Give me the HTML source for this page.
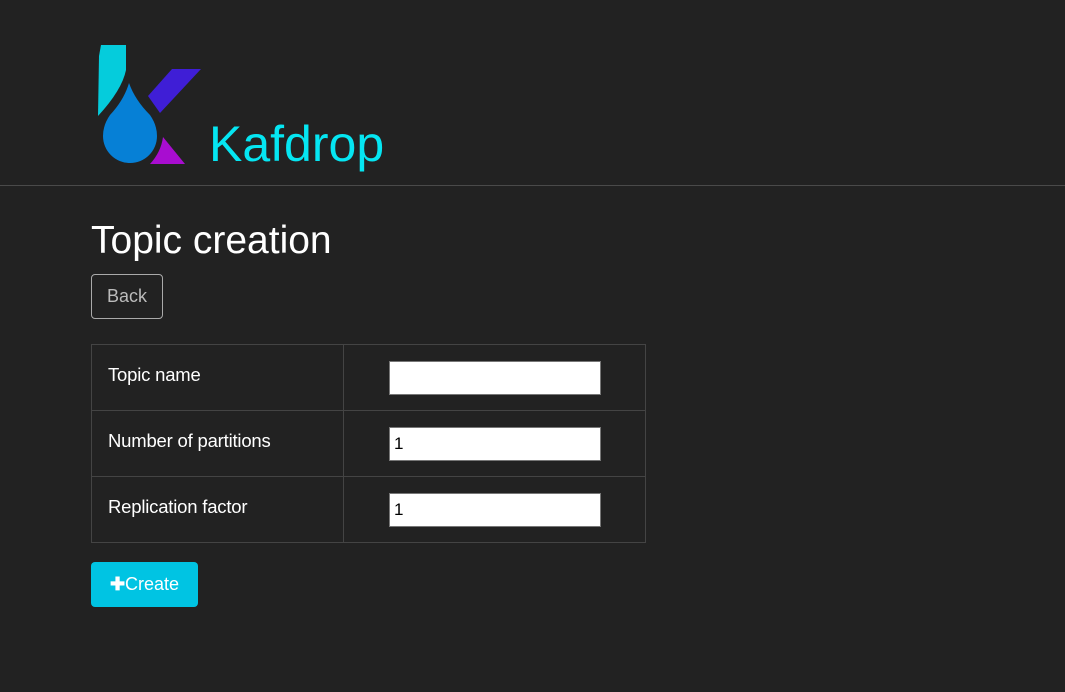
<!DOCTYPE html>
<html><head><style>
body{margin:0;background:#222;width:1065px;height:692px;overflow:hidden;font-family:"Liberation Sans",sans-serif;color:#fff;position:relative}
.hr{position:absolute;left:0;top:185px;width:1065px;height:1px;background:#4a4a4a}
.brand{position:absolute;left:209px;top:114px;font-size:50px;color:#05e6f2;line-height:60px}
h1{position:absolute;left:91px;top:217px;margin:0;font-weight:normal;font-size:39px;line-height:48px}
.back{position:absolute;left:91px;top:274px;width:70px;height:43px;border:1px solid #aaa;border-radius:4px;color:#bbb;font-size:18px;line-height:43px;text-align:center}
table{position:absolute;left:91px;top:344px;border-collapse:collapse;width:555px}
td{border:1px solid #444;height:65px;padding:0;font-size:18.5px;vertical-align:middle;letter-spacing:-0.2px}
td.l{width:235px;padding-left:16px;padding-bottom:6px;height:59px}
.in{margin-left:45px;background:#fff;border:1px solid #777;color:#000;font-size:17px;line-height:32px;padding-left:4px;box-sizing:border-box;width:212px;height:34px}
.create{position:absolute;left:91px;top:562px;width:107px;height:45px;background:#00c4e3;border-radius:4px;font-size:18px;line-height:45px;text-align:center}
</style></head><body>
<svg style="position:absolute;left:0;top:0" width="220" height="180">
<path d="M99,56 L101,45 L126,45 L126,70 Q122,90 98,116 Z" fill="#05ccdc"/>
<path d="M148,96 L172,69 L201,69 L160,113 Z" fill="#3f1ed6"/>
<path d="M129,83 Q135,100 150,115 Q157,125 157,136 A27,27 0 0 1 103,136 Q103,125 110,115 Q124,100 129,83 Z" fill="#0680d6"/>
<path d="M163,137 L185,164 L150,164 Q161,152 163,137 Z" fill="#a80dd0"/>
</svg>
<div class="brand">Kafdrop</div>
<div class="hr"></div>
<h1>Topic creation</h1>
<div class="back">Back</div>
<table>
<tr><td class="l">Topic name</td><td><div class="in"></div></td></tr>
<tr><td class="l">Number of partitions</td><td><div class="in">1</div></td></tr>
<tr><td class="l">Replication factor</td><td><div class="in">1</div></td></tr>
</table>
<div class="create"><b>✚</b>Create</div>
</body></html>
